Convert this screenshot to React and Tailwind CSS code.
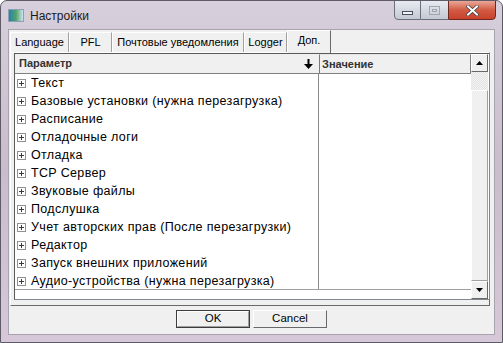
import React from 'react'

const items = [
  'Текст',
  'Базовые установки (нужна перезагрузка)',
  'Расписание',
  'Отладочные логи',
  'Отладка',
  'TCP Сервер',
  'Звуковые файлы',
  'Подслушка',
  'Учет авторских прав (После перезагрузки)',
  'Редактор',
  'Запуск внешних приложений',
  'Аудио-устройства (нужна перезагрузка)',
]

const tabs = [
  { label: 'Language', w: 'w-[59px]' },
  { label: 'PFL', w: 'w-[43px]' },
  { label: 'Почтовые уведомления', w: 'w-[132px]' },
  { label: 'Logger', w: 'w-[43px]' },
]

function PlusBox() {
  return (
    <span className="relative w-[9px] h-[9px] border border-[#919191] bg-white shrink-0">
      <span className="absolute left-[1px] top-[3px] w-[5px] h-px bg-[#3a3a3a]" />
      <span className="absolute left-[3px] top-[1px] w-px h-[5px] bg-[#3a3a3a]" />
    </span>
  )
}

function ScrollButton({ up }) {
  return (
    <div className="h-[18px] bg-[#f0f0f0] border border-t-white border-l-white border-r-[#696969] border-b-[#696969] flex items-center justify-center">
      <svg width="7" height="4" viewBox="0 0 7 4">
        {up ? <polygon points="3.5,0 7,4 0,4" fill="#000" /> : <polygon points="0,0 7,0 3.5,4" fill="#000" />}
      </svg>
    </div>
  )
}

export default function App() {
  return (
    <div
      className="w-[503px] h-[343px] flex flex-col rounded-t-[7px] border border-[#5e5a66] bg-gradient-to-b from-[#d7cfdb] via-[#c9bccc] to-[#d6c8d9] overflow-hidden"
      style={{ fontFamily: '"Liberation Sans", Arial, sans-serif' }}
    >
      {/* Title bar */}
      <div className="h-[28px] flex items-start justify-between shrink-0">
        <div className="flex items-center h-[28px] pl-[7px] gap-[6px]">
          <div className="w-[16px] h-[13px] border border-[#8aa0b4] bg-gradient-to-r from-[#2e7fa8] via-[#4fa36a] to-[#cfe3f0]" />
          <span className="text-[12px] text-[#1a1a1a] mt-[1px]">Настройки</span>
        </div>
        <div className="flex mr-[6px] -mt-px">
          <div className="w-[27px] h-[20px] rounded-bl-[4px] border border-[#6a6f7b] bg-gradient-to-b from-[#e8ebf0] to-[#c3c9d3] flex items-center justify-center">
            <div className="w-[11px] h-[4px] mt-[5px] bg-[#f4f4f6] border border-[#4a4f5a]" />
          </div>
          <div className="w-[27px] h-[20px] border-y border-[#6a6f7b] bg-gradient-to-b from-[#e8ebf0] to-[#c3c9d3] flex items-center justify-center">
            <div className="w-[11px] h-[9px] border border-[#a0a5ae] flex items-center justify-center">
              <div className="w-[5px] h-[3px] border border-[#a0a5ae]" />
            </div>
          </div>
          <div className="w-[48px] h-[20px] rounded-br-[4px] border border-[#6e2a22] bg-gradient-to-b from-[#e9a798] via-[#d25a43] to-[#c8412a] flex items-center justify-center">
            <svg width="13" height="11" viewBox="0 0 13 11">
              <path d="M2 1.5 L11 9.5 M11 1.5 L2 9.5" stroke="#3c3c3c" strokeWidth="3.4" strokeLinecap="square" />
              <path d="M2 1.5 L11 9.5 M11 1.5 L2 9.5" stroke="#ffffff" strokeWidth="2" strokeLinecap="square" />
            </svg>
          </div>
        </div>
      </div>

      {/* Client area */}
      <div className="flex-1 mx-[7px] mb-[7px] bg-[#f0f0f0] border border-[#a9a3ad] flex flex-col">
        {/* Tabs */}
        <div className="flex items-end h-[22px] pl-[1px] text-[11px] text-black">
          {tabs.map((t) => (
            <div
              key={t.label}
              className={`${t.w} h-[20px] border-l border-t border-r border-l-white border-t-white border-r-[#a0a0a0] flex items-center justify-center bg-[#f0f0f0]`}
            >
              {t.label}
            </div>
          ))}
          <div className="w-[44px] h-[23px] -mb-px border-l border-t border-r border-l-white border-t-white border-r-[#696969] flex items-center justify-center pb-[3px] bg-[#f0f0f0] relative z-10">
            Доп.
          </div>
        </div>

        {/* Tab panel */}
        <div className="h-[254px] shrink-0 ml-[1px] mr-[4px] border border-l-white border-t-white border-r-[#696969] border-b-[#696969] pl-[3px]">
          <div className="w-[476px] h-[247px] border border-[#828790] border-l-[#5a5a5a] border-t-[#5a5a5a] bg-white flex">
            {/* Tree/list */}
            <div className="w-[456px] flex flex-col">
              <div className="h-[20px] flex text-[11px] font-bold text-[#333]">
                <div className="w-[304px] bg-[#f0f0f0] border-b border-[#808080] flex items-center justify-between pl-[4px] pr-[6px]">
                  <span>Параметр</span>
                  <svg width="9" height="10" viewBox="0 0 9 10">
                    <path d="M4.5 0 V8" stroke="#000" strokeWidth="2" />
                    <polygon points="0,5 9,5 4.5,10" fill="#000" />
                  </svg>
                </div>
                <div className="flex-1 bg-[#f0f0f0] border border-[#808080] border-l-[#7a7a7a] border-t-[#e6e6e6] flex items-center pl-[2px]">
                  Значение
                </div>
              </div>
              <div className="flex h-[216px] border-b border-[#a0a0a0]">
                <div className="w-[304px] border-r border-[#8c8c8c] flex flex-col text-[12.5px] text-black">
                  {items.map((it) => (
                    <div key={it} className="h-[18px] flex items-center pl-[2px] gap-[5px]">
                      <PlusBox />
                      <span className="tracking-[0.35px] whitespace-nowrap">{it}</span>
                    </div>
                  ))}
                </div>
                <div className="flex-1" />
              </div>
            </div>
            {/* Scrollbar */}
            <div className="w-[17px] flex flex-col bg-[repeating-conic-gradient(#f4f4f4_0%_25%,#e3e3e3_0%_50%)] bg-[length:2px_2px]">
              <ScrollButton up />
              <div className="h-[18px]" />
              <div className="flex-1 bg-[#f0f0f0] border border-t-white border-l-white border-r-[#a0a0a0] border-b-[#a0a0a0]" />
              <ScrollButton />
            </div>
          </div>
        </div>

        {/* Buttons */}
        <div className="flex-1 flex items-start justify-center gap-[3px] pt-[4px] text-[11.5px] text-black">
          <div className="w-[74px] h-[18px] border border-[#3c3c3c] bg-[#f0f0f0] flex items-center justify-center">
            <div className="w-full h-full border border-t-white border-l-white border-r-[#a0a0a0] border-b-[#a0a0a0] flex items-center justify-center">
              OK
            </div>
          </div>
          <div className="w-[74px] h-[18px] border border-t-white border-l-white border-r-[#696969] border-b-[#696969] bg-[#f0f0f0] flex items-center justify-center">
            Cancel
          </div>
        </div>
      </div>
    </div>
  )
}
